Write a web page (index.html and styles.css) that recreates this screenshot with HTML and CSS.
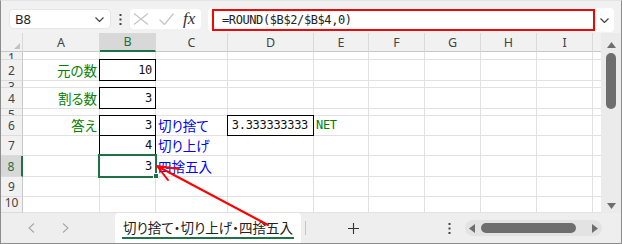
FILE: index.html
```html
<!DOCTYPE html>
<html>
<head>
<meta charset="utf-8">
<link rel="stylesheet" href="styles.css">
</head>
<body>
<div class="window">
    <!-- name box and formula bar -->
    <div class="toolbar">
        <div class="namebox">
            <span>B8</span>
            <svg width="9" height="5" viewBox="0 0 9 5"><path d="M0.5 0.5 L4.5 4.5 L8.5 0.5" fill="none" stroke="#444" stroke-width="1.2"/></svg>
        </div>
        <div class="kebab">
            <svg width="3" height="11" viewBox="0 0 3 11"><rect x="0.5" y="0" width="2" height="2" fill="#444"/><rect x="0.5" y="4.5" width="2" height="2" fill="#444"/><rect x="0.5" y="9" width="2" height="2" fill="#444"/></svg>
        </div>
        <div class="fxbox">
            <svg class="ic-cancel" width="16" height="12" viewBox="0 0 16 12"><path d="M1 0.5 L15 11.5 M15 0.5 L1 11.5" stroke="#c4c4c4" stroke-width="1.2" fill="none"/></svg>
            <svg class="ic-enter" width="15" height="12" viewBox="0 0 15 12"><path d="M0.5 6.5 L5.5 11.5 L14.5 0.5" stroke="#c4c4c4" stroke-width="1.2" fill="none"/></svg>
            <span class="fx">fx</span>
        </div>
        <div class="formula">
            <div class="formula-input">=ROUND($B$2/$B$4,0)</div>
            <svg class="formula-drop" width="9" height="5" viewBox="0 0 9 5"><path d="M0.5 0.5 L4.5 4.5 L8.5 0.5" fill="none" stroke="#444" stroke-width="1.2"/></svg>
        </div>
    </div>

    <div class="main">
        <div class="sheet">
            <div class="row colhead">
                <div class="corner"><i class="tri"></i></div>
                <div>A</div><div class="on">B</div><div>C</div><div>D</div><div>E</div>
                <div>F</div><div>G</div><div>H</div><div>I</div><div></div>
            </div>
            <div class="row h8">
                <div class="rh thin">1</div>
                <div></div><div></div><div></div><div></div><div></div><div></div><div></div><div></div><div></div><div></div>
            </div>
            <div class="row h21">
                <div class="rh">2</div>
                <div class="lbl">元の数</div><div class="num box">10</div>
                <div></div><div></div><div></div><div></div><div></div><div></div><div></div><div></div>
            </div>
            <div class="row h7">
                <div class="rh thin">3</div>
                <div></div><div></div><div></div><div></div><div></div><div></div><div></div><div></div><div></div><div></div>
            </div>
            <div class="row h21">
                <div class="rh">4</div>
                <div class="lbl">割る数</div><div class="num box">3</div>
                <div></div><div></div><div></div><div></div><div></div><div></div><div></div><div></div>
            </div>
            <div class="row h7">
                <div class="rh thin">5</div>
                <div></div><div></div><div></div><div></div><div></div><div></div><div></div><div></div><div></div><div></div>
            </div>
            <div class="row h20">
                <div class="rh">6</div>
                <div class="lbl">答え</div><div class="num box">3</div><div class="note">切り捨て</div>
                <div class="num box wide">3.333333333</div><div class="net">NET</div>
                <div></div><div></div><div></div><div></div><div></div>
            </div>
            <div class="row h20">
                <div class="rh">7</div>
                <div></div><div class="num box">4</div><div class="note">切り上げ</div>
                <div></div><div></div><div></div><div></div><div></div><div></div><div></div>
            </div>
            <div class="row h21">
                <div class="rh on">8</div>
                <div></div><div class="num sel">3<i class="handle"></i></div><div class="note">四捨五入</div>
                <div></div><div></div><div></div><div></div><div></div><div></div><div></div>
            </div>
            <div class="row h20">
                <div class="rh">9</div>
                <div></div><div></div><div></div><div></div><div></div><div></div><div></div><div></div><div></div><div></div>
            </div>
            <div class="row h16">
                <div class="rh">10</div>
                <div></div><div></div><div></div><div></div><div></div><div></div><div></div><div></div><div></div><div></div>
            </div>
        </div>
        <div class="vscroll">
            <svg class="up" width="9" height="6" viewBox="0 0 9 6"><path d="M4.5 0 L9 6 L0 6 Z" fill="#6e6e6e"/></svg>
            <div class="vthumb"></div>
            <svg class="down" width="9" height="6" viewBox="0 0 9 6"><path d="M0 0 L9 0 L4.5 6 Z" fill="#6e6e6e"/></svg>
        </div>
    </div>

    <!-- sheet tabs -->
    <div class="tabbar">
        <div class="nav">
            <svg width="7" height="10" viewBox="0 0 7 10"><path d="M6 0.5 L1 5 L6 9.5" fill="none" stroke="#a8a8a8" stroke-width="1.1"/></svg>
            <svg width="7" height="10" viewBox="0 0 7 10"><path d="M1 0.5 L6 5 L1 9.5" fill="none" stroke="#a8a8a8" stroke-width="1.1"/></svg>
        </div>
        <div class="tab"><span>切り捨て・切り上げ・四捨五入</span></div>
        <div class="sep"></div>
        <div class="add">
            <svg width="11" height="11" viewBox="0 0 11 11"><path d="M5.5 0 V11 M0 5.5 H11" stroke="#333" stroke-width="1.1"/></svg>
        </div>
        <div class="more">
            <svg width="3" height="11" viewBox="0 0 3 11"><rect x="0.5" y="0" width="2" height="2" fill="#444"/><rect x="0.5" y="4.5" width="2" height="2" fill="#444"/><rect x="0.5" y="9" width="2" height="2" fill="#444"/></svg>
        </div>
        <div class="hscroll">
            <svg width="6" height="9" viewBox="0 0 6 9"><path d="M0 4.5 L6 0 L6 9 Z" fill="#6e6e6e"/></svg>
            <div class="hthumb"></div>
            <svg class="right" width="6" height="9" viewBox="0 0 6 9"><path d="M0 0 L6 4.5 L0 9 Z" fill="#6e6e6e"/></svg>
        </div>
    </div>

    <!-- red annotation arrow -->
    <svg class="arrow" width="622" height="244" viewBox="0 0 622 244">
        <path d="M268 225 L157 166 M157 166 L179 169 M157 166 L168 180" fill="none" stroke="#ff0000" stroke-width="2" stroke-linecap="round"/>
    </svg>
</div>
</body>
</html>
```

FILE: styles.css
```css
body {
    margin: 0;
}

.window {
    position: relative;
    width: 622px;
    height: 244px;
    box-sizing: border-box;
    border: 1px solid #8c8c8c;
    border-top-color: #e4e4e4;
    background: #f1f1f1;
    overflow: hidden;
    font-family: "Noto Sans", sans-serif;
}

/* toolbar */
.toolbar {
    display: flex;
    align-items: flex-start;
    height: 32px;
    padding: 8px 0 0 8px;
    box-sizing: border-box;
}

.namebox {
    width: 102px;
    height: 20px;
    box-sizing: border-box;
    background: #fff;
    border: 1px solid #e6e6e6;
    border-radius: 4px;
    display: flex;
    align-items: center;
    justify-content: space-between;
    padding: 0 6px 0 5px;
    font-size: 13px;
    color: #222;
}

.kebab {
    width: 19px;
    height: 20px;
    display: flex;
    align-items: center;
    justify-content: center;
}

.fxbox {
    width: 71px;
    height: 20px;
    background: #fff;
    border-radius: 4px;
    display: flex;
    align-items: center;
    padding-left: 3px;
    box-sizing: border-box;
}

.ic-enter {
    margin-left: 10px;
}

.fx {
    margin-left: 9px;
    font-family: "Liberation Serif", serif;
    font-style: italic;
    font-size: 17px;
    line-height: 20px;
    color: #333;
}

.formula {
    margin-left: 7px;
    margin-top: -1px;
    width: 406px;
    height: 24px;
    background: #fff;
    border-radius: 4px;
    display: flex;
    align-items: center;
    padding-left: 4px;
    box-sizing: border-box;
}

.formula-input {
    width: 383px;
    height: 22px;
    box-sizing: border-box;
    border: 2px solid #ff0000;
    padding-left: 8px;
    font-family: "DejaVu Sans Mono", monospace;
    font-size: 12px;
    letter-spacing: -0.4px;
    line-height: 18px;
    color: #222;
}

.formula-drop {
    margin-left: 5px;
}

/* grid */
.main {
    display: flex;
    height: 180px;
}

.sheet {
    width: 600px;
    background: #fff;
    font-family: "Noto Sans CJK JP", sans-serif;
}

.row {
    display: grid;
    grid-template-columns: 22px 77px 56px 72px 86px 55px 56px 56px 56px 56px 8px;
}

.row > div {
    border-right: 1px solid #e1e1e1;
    border-bottom: 1px solid #e1e1e1;
    box-sizing: border-box;
    white-space: nowrap;
    display: flex;
    align-items: flex-end;
    padding: 0 2px 1px;
    font-size: 13.5px;
    line-height: 17px;
}

.row > div:last-child {
    border-right: none;
}

.h7 { height: 7px; }
.h8 { height: 8px; }
.h16 { height: 16px; }
.h20 { height: 20px; }
.h21 { height: 21px; }

.colhead {
    height: 19px;
}

.colhead > div {
    align-items: center;
    justify-content: center;
    padding: 0;
    background: #f1f1f1;
    border-right-color: #d9d9d9;
    border-bottom-color: #c8c8c8;
    font-family: "Noto Sans", sans-serif;
    font-size: 12.5px;
    color: #444;
}

.colhead > div.on {
    background: #d8d8d8;
    color: #1e7145;
    border-bottom: 2px solid #1e7145;
}

.colhead .corner {
    justify-content: flex-end;
    align-items: flex-end;
    padding: 0 2px 2px 0;
}

.tri {
    width: 0;
    height: 0;
    border-left: 6px solid transparent;
    border-bottom: 6px solid #c2c2c2;
}

.row > .rh {
    justify-content: center;
    padding: 0 0 1px;
    overflow: hidden;
    background: #f1f1f1;
    border-right-color: #c8c8c8;
    border-bottom-color: #dcdcdc;
    font-family: "Noto Sans", sans-serif;
    font-size: 12px;
    color: #444;
}

/* short rows show only the top of the number */
.row > .rh.thin {
    align-items: flex-start;
    line-height: 12px;
    padding: 0;
}

.row > .rh.on {
    background: #d8d8d8;
    color: #1e7145;
    border-right: 2px solid #1e7145;
}

.row > .num {
    justify-content: flex-end;
    padding-right: 3px;
    font-family: "DejaVu Sans Mono", monospace;
    font-size: 12px;
    letter-spacing: -0.3px;
    color: #111;
}

.row > .wide {
    padding-right: 5px;
}

.lbl {
    justify-content: flex-end;
    color: #008000;
    font-feature-settings: "palt";
}

.note {
    color: #0000ff;
    font-feature-settings: "palt";
}

.row > .net {
    padding-left: 2px;
    font-family: "DejaVu Sans Mono", monospace;
    font-size: 12px;
    letter-spacing: -0.3px;
    color: #008000;
}

.box,
.sel {
    position: relative;
}

.box::after {
    content: "";
    position: absolute;
    top: -1px;
    left: -1px;
    right: -1px;
    bottom: -1px;
    border: 1px solid #000;
    z-index: 1;
}

.sel::after {
    content: "";
    position: absolute;
    top: -2px;
    left: -2px;
    right: -2px;
    bottom: -2px;
    border: 2px solid #1e7145;
    z-index: 1;
}

.handle {
    position: absolute;
    right: -4px;
    bottom: -3px;
    width: 4px;
    height: 4px;
    background: #1e7145;
    border: 1px solid #fff;
    z-index: 2;
}

/* vertical scroll bar */
.vscroll {
    width: 20px;
    background: #ebebeb;
    display: flex;
    flex-direction: column;
    align-items: center;
}

.vscroll .up {
    margin-top: 9px;
}

.vthumb {
    margin-top: 5px;
    width: 10px;
    height: 56px;
    border-radius: 5px;
    background: #6e6e6e;
}

.vscroll .down {
    margin-top: auto;
    margin-bottom: 4px;
}

/* sheet tabs */
.tabbar {
    display: flex;
    align-items: center;
    height: 30px;
    background: #eeeeee;
}

.nav {
    width: 114px;
    display: flex;
    align-items: center;
    gap: 27px;
    padding-left: 27px;
    box-sizing: border-box;
}

.tab {
    align-self: stretch;
    width: 186px;
    background: #fff;
    border-radius: 4px 4px 0 0;
    display: flex;
    justify-content: center;
    align-items: flex-start;
    padding-top: 5px;
    box-sizing: border-box;
}

.tab span {
    padding: 0 1px 1px;
    border-bottom: 2px solid #1e7145;
    font-family: "Noto Sans CJK JP", sans-serif;
    font-feature-settings: "palt";
    font-size: 13.5px;
    line-height: 18px;
    color: #222;
}

.sep {
    margin-left: 4px;
    width: 1px;
    height: 14px;
    background: #c6c6c6;
}

.add {
    width: 95px;
    display: flex;
    justify-content: center;
}

.more {
    margin-left: 40px;
    width: 16px;
    display: flex;
    justify-content: center;
}

.hscroll {
    margin-left: 8px;
    width: 137px;
    height: 16px;
    border-radius: 8px;
    background: #e3e3e3;
    display: flex;
    align-items: center;
    padding-left: 4px;
    box-sizing: border-box;
}

.hthumb {
    margin-left: 6px;
    width: 95px;
    height: 10px;
    border-radius: 5px;
    background: #6e6e6e;
}

.hscroll .right {
    margin-left: 16px;
}

.arrow {
    position: absolute;
    top: -1px;
    left: -1px;
    pointer-events: none;
    z-index: 5;
}
```
